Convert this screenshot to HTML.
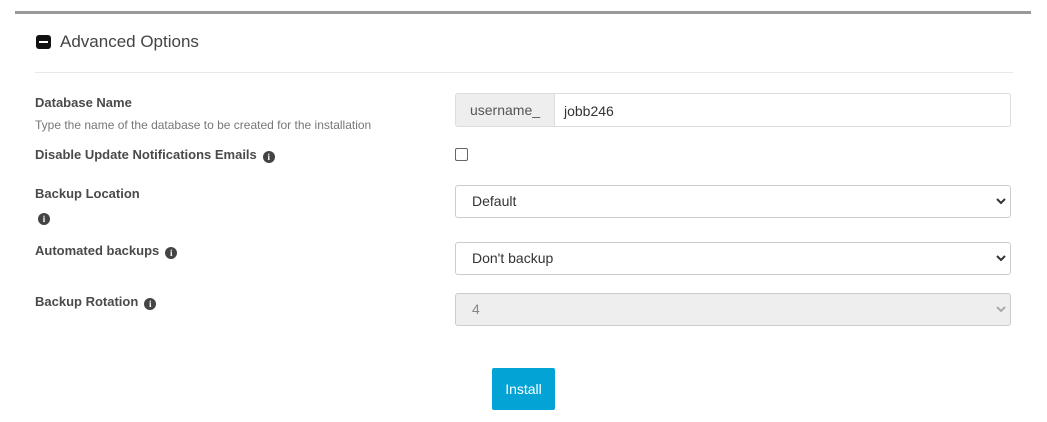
<!DOCTYPE html>
<html><head><style>
body{margin:0;width:1047px;height:422px;background:#fff;position:relative;font-family:"Liberation Sans",sans-serif;overflow:hidden}
.a{position:absolute}
.lbl{font-size:13px;font-weight:bold;color:#4a4a4a;white-space:nowrap}
.inf{display:inline-block;width:12px;height:12px;border-radius:50%;background:#444;color:#fff;font-size:9px;font-weight:bold;text-align:center;line-height:12px;font-family:"Liberation Serif",serif;vertical-align:-1px;margin-left:6px}
.sel{position:absolute;left:455px;width:556px;height:33px;border:1px solid #ccc;border-radius:3px;box-sizing:border-box;font-size:14px;color:#333;padding-left:16px;line-height:31px}
.sel svg{position:absolute;right:4px;top:12px}
</style></head><body>
<div class="a" style="left:15px;top:11px;width:1016px;height:3px;background:#999"></div>
<div class="a" style="left:36px;top:35px;width:15px;height:14px;background:#111;border-radius:3px"><div style="position:absolute;left:3px;top:6px;width:9px;height:2px;background:#fff"></div></div>
<div class="a" style="left:60px;top:32px;font-size:17px;color:#444">Advanced Options</div>
<div class="a" style="left:35px;top:72px;width:978px;height:1px;background:#e8e8e8"></div>

<div class="a lbl" style="left:35px;top:95px">Database Name</div>
<div class="a" style="left:35px;top:118px;font-size:12px;color:#777">Type the name of the database to be created for the installation</div>
<div class="a lbl" style="left:35px;top:147px">Disable Update Notifications Emails<span class="inf">i</span></div>
<div class="a lbl" style="left:35px;top:186px">Backup Location</div>
<div class="a" style="left:32px;top:208px"><span class="inf">i</span></div>
<div class="a lbl" style="left:35px;top:243px">Automated backups<span class="inf">i</span></div>
<div class="a lbl" style="left:35px;top:294px">Backup Rotation<span class="inf">i</span></div>

<div class="a" style="left:455px;top:93px;width:556px;height:34px;border:1px solid #ddd;border-radius:3px;box-sizing:border-box;overflow:hidden">
<div style="position:absolute;left:0;top:0;width:98px;height:32px;background:#eee;border-right:1px solid #ddd;font-size:14px;color:#555;line-height:32px;text-align:center">username_</div>
<div style="position:absolute;left:108px;top:0;font-size:14px;color:#333;line-height:34px">jobb246</div>
</div>
<div class="a" style="left:455px;top:148px;width:11px;height:11px;border:1px solid #666;border-radius:2px"></div>

<div class="sel" style="top:185px">Default<svg width="10" height="7"><path d="M1 1l4 4 4-4" stroke="#333" stroke-width="2" fill="none"/></svg></div>
<div class="sel" style="top:242px">Don't backup<svg width="10" height="7"><path d="M1 1l4 4 4-4" stroke="#333" stroke-width="2" fill="none"/></svg></div>
<div class="sel" style="top:293px;background:#eee;color:#888">4<svg width="10" height="7"><path d="M1 1l4 4 4-4" stroke="#aaa" stroke-width="2" fill="none"/></svg></div>

<div class="a" style="left:492px;top:368px;width:63px;height:42px;background:#04a3d5;border-radius:2px;color:#fff;font-size:14px;text-align:center;line-height:42px">Install</div>
</body></html>
